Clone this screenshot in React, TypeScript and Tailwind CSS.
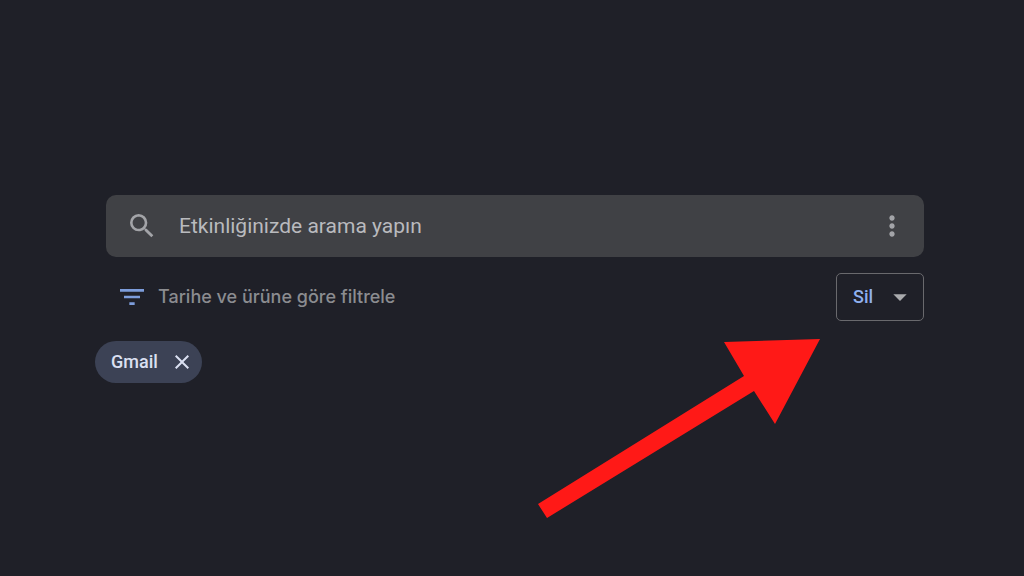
import React, { useState } from 'react'

import { MdArrowDropDown, MdClose, MdFilterList, MdMoreVert, MdSearch } from 'react-icons/md'

/**
 * SearchBar - Full width activity search with an overflow menu button
 */
const SearchBar = () => {
  const [query, setQuery] = useState('')

  return (
    <div
      role="search"
      className="flex items-center h-[62px] pl-5 pr-4 rounded-[10px] bg-[#404145] text-[#a3a4a8]"
    >
      <MdSearch className="w-8 h-8 flex-shrink-0" aria-hidden="true" />
      <input
        type="text"
        value={query}
        onChange={(e) => setQuery(e.target.value)}
        placeholder="Etkinliğinizde arama yapın"
        aria-label="Etkinliğinizde arama yapın"
        className="flex-1 min-w-0 ml-[21px] bg-transparent text-[21px] leading-7 text-[#b9babe] placeholder:text-[#b9babe] outline-none"
      />
      <button type="button" aria-label="Diğer seçenekler" className="flex-shrink-0">
        <MdMoreVert className="w-8 h-8" aria-hidden="true" />
      </button>
    </div>
  )
}

/**
 * DeleteSelect - Outlined drop-down with the delete action
 */
const DeleteSelect = () => {
  return (
    <div className="relative">
      <select
        aria-label="Sil"
        defaultValue="sil"
        className="appearance-none block w-[88px] h-12 pl-4 rounded-[5px] border border-[#69696d] bg-transparent text-lg font-medium text-[#8fb0ee] outline-none"
      >
        <option value="sil">Sil</option>
      </select>
      <MdArrowDropDown
        className="absolute right-2 top-2 w-8 h-8 text-[#a9aaad] pointer-events-none"
        aria-hidden="true"
      />
      <RedArrow />
    </div>
  )
}

/** Annotation arrow pointing up at the delete control */
const RedArrow = () => {
  return (
    <svg
      viewBox="0 0 284 180"
      className="absolute right-[103px] top-[66px] w-[284px] h-[180px] max-w-none pointer-events-none"
      aria-hidden="true"
    >
      <path fill="#ff1917" d="M283 0 L238 85 L217 52 L10 179 L1 165 L207 37 L187 3 Z" />
    </svg>
  )
}

export default function App() {
  const [filters, setFilters] = useState(['Gmail'])

  return (
    <main className="min-h-screen overflow-hidden pt-[195px] pl-[95px] pr-[100px] bg-[#1f2028] font-['Roboto',sans-serif]">
      <div className="pl-[11px]">
        <SearchBar />

        {/* Filter and delete row */}
        <div className="flex items-center justify-between mt-4 pl-[10px]">
          <button
            type="button"
            className="flex items-center gap-[10px] font-['Inter',sans-serif] text-lg leading-6 font-medium text-[#8b8c90]"
          >
            <MdFilterList className="w-8 h-8 text-[#7d9ddb]" aria-hidden="true" />
            Tarihe ve ürüne göre filtrele
          </button>
          <DeleteSelect />
        </div>
      </div>

      {/* Active filters */}
      <div className="flex gap-2 mt-5">
        {filters.map((name) => (
          <div
            key={name}
            className="flex items-center gap-3 h-[42px] pl-4 pr-2 rounded-full bg-[#3c4255] text-[#dbe0f2]"
          >
            <span className="text-lg font-medium">{name}</span>
            <button
              type="button"
              onClick={() => setFilters(filters.filter((f) => f !== name))}
              aria-label={`${name} filtresini kaldır`}
            >
              <MdClose className="w-6 h-6" aria-hidden="true" />
            </button>
          </div>
        ))}
      </div>
    </main>
  )
}
